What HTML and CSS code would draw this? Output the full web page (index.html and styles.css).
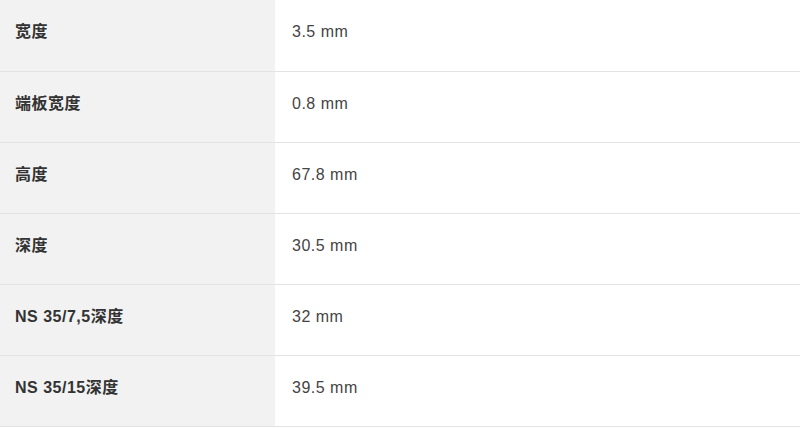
FILE: index.html
```html
<!DOCTYPE html>
<html lang="zh">
<head>
<meta charset="utf-8">
<link rel="stylesheet" href="styles.css">
</head>
<body>
<table class="spec">
  <tbody>
    <tr><th>宽度</th><td>3.5 mm</td></tr>
    <tr><th>端板宽度</th><td>0.8 mm</td></tr>
    <tr><th>高度</th><td>67.8 mm</td></tr>
    <tr><th>深度</th><td>30.5 mm</td></tr>
    <tr><th>NS 35/7,5深度</th><td>32 mm</td></tr>
    <tr><th>NS 35/15深度</th><td>39.5 mm</td></tr>
  </tbody>
</table>
</body>
</html>
```
FILE: styles.css
```css
html, body {
  margin: 0;
  padding: 0;
  background: #ffffff;
}
.spec {
  width: 800px;
  border-collapse: collapse;
  font-family: "Liberation Sans", Arial, "Noto Sans CJK SC", sans-serif;
  font-size: 16px;
  letter-spacing: 0.5px;
  color: #333333;
}
.spec tr {
  height: 71.17px;
  border-bottom: 1px solid #e3e3e3;
}
.spec th, .spec td {
  padding: 0 15px 6px 15px;
  vertical-align: middle;
  text-align: left;
  line-height: 20px;
}
.spec th {
  width: 245px;
  background: #f2f2f2;
  font-weight: bold;
  color: #333333;
}
.spec td {
  padding-left: 17px;
  font-weight: normal;
  color: #444444;
}
```
